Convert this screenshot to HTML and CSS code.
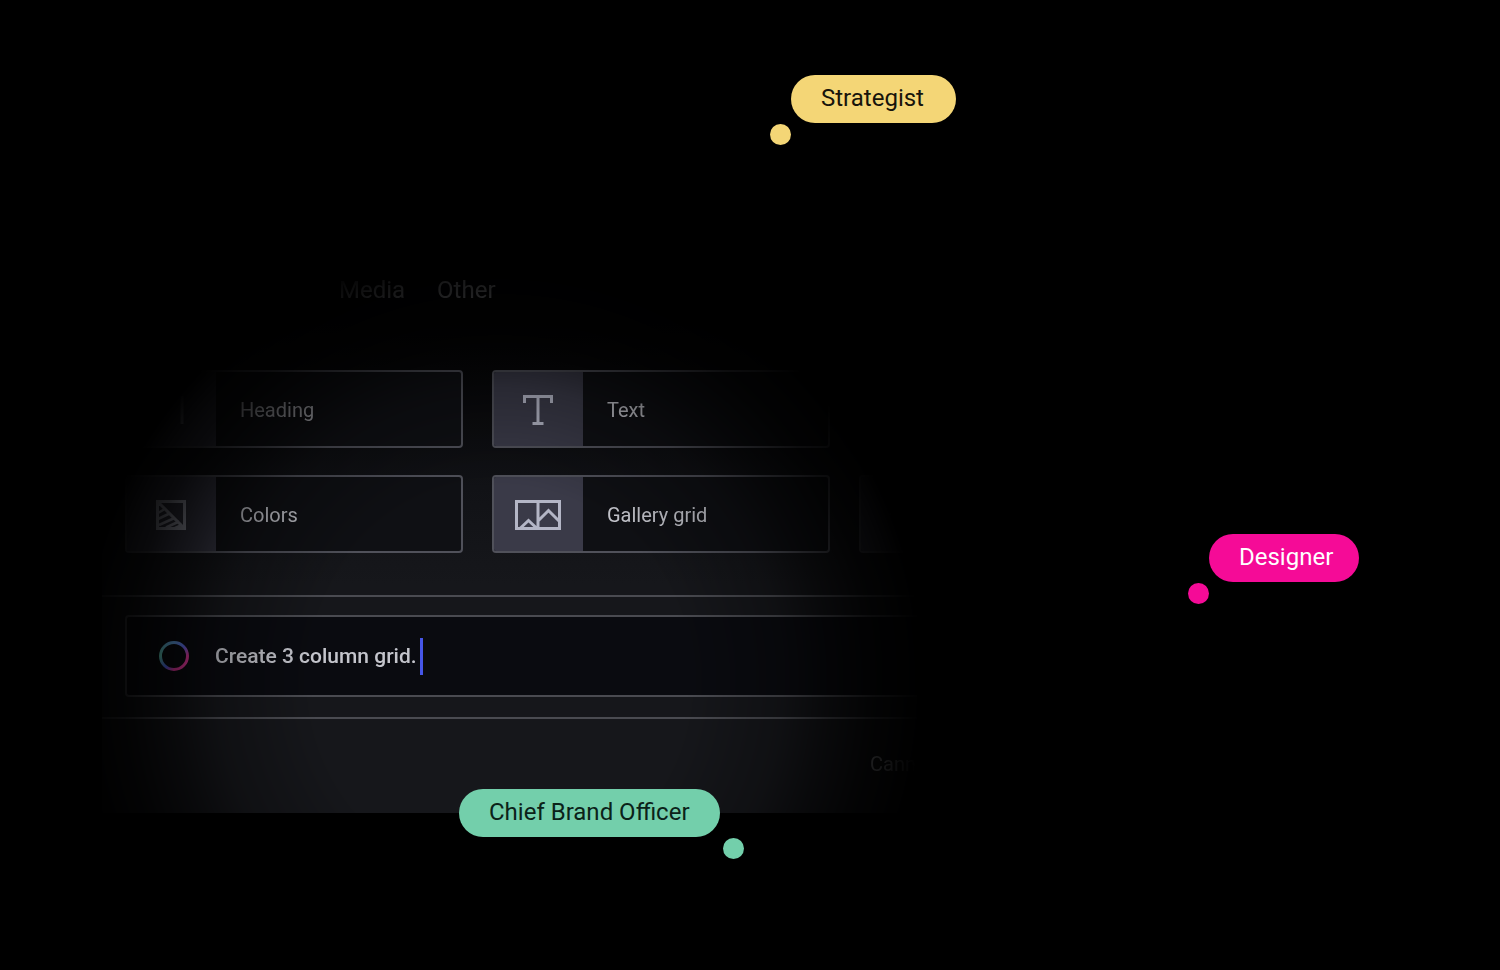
FILE: index.html
```
<!DOCTYPE html>
<html lang="en">
<head>
  <meta charset="UTF-8" />
  <title>Create</title>
  <link rel="stylesheet" href="styles.css">
</head>
<body>
  <main class="stage">
    <section class="window">
      <nav class="tabs">
        <a href="#media">Media</a>
        <a href="#other">Other</a>
      </nav>

      <div class="blocks">
        <button class="block" type="button">
          <span class="tile">
            <svg width="46" height="32" viewBox="0 0 46 32"><path d="M34 2v28" /></svg>
          </span>
          <span class="block-name">Heading</span>
        </button>
        <button class="block" type="button">
          <span class="tile">
            <svg width="46" height="32" viewBox="0 0 46 32"><path d="M9.500 9V2.500h27V9M23 2.500v27M17.500 29.500h11" /></svg>
          </span>
          <span class="block-name">Text</span>
        </button>
        <button class="block" type="button" aria-label="Page">
          <span class="tile"></span>
        </button>
        <button class="block" type="button">
          <span class="tile">
            <svg width="46" height="32" viewBox="0 0 46 32"><path d="M9.500 2.500h27v27h-27zM9.500 2.500l27 27" /><path class="hatch" d="M10 14l6-3.500M10 20l11.500-5.500M11 26l15.500-7M18 28.500l13-6M27 29l7-3" /></svg>
          </span>
          <span class="block-name">Colors</span>
        </button>
        <button class="block" type="button">
          <span class="tile">
            <svg width="46" height="32" viewBox="0 0 46 32"><path d="M1.500 2.500h43v27h-43zM23 2.500v27M5.500 29l8-7.500 8 7.500M23 22l10.500-10.500L44 22" /></svg>
          </span>
          <span class="block-name">Gallery grid</span>
        </button>
        <button class="block" type="button" aria-label="Image">
          <span class="tile">
            <svg width="46" height="32" viewBox="0 0 46 32"><path d="M9 16l6-10 18 17" /></svg>
          </span>
        </button>
      </div>

      <div class="prompt-row">
        <label class="prompt">
          <svg class="ring" width="32" height="32" viewBox="0 0 32 32">
            <path d="M2.500 16A13.500 13.500 0 0 1 16 2.500" stroke="url(#green)" />
            <path d="M16 2.500A13.500 13.500 0 0 1 29.500 16" stroke="url(#violet)" />
            <path d="M29.500 16A13.500 13.500 0 0 1 16 29.500" stroke="#f03ca6" />
            <path d="M16 29.500A13.500 13.500 0 0 1 2.500 16" stroke="url(#blue)" />
            <defs>
              <linearGradient id="green" x1="0" y1="1" x2="1" y2="0"><stop stop-color="#6ce0ca" /><stop offset="1" stop-color="#68aaf0" /></linearGradient>
              <linearGradient id="violet" x1="0" y1="0" x2="1" y2="1"><stop stop-color="#68aaf0" /><stop offset=".5" stop-color="#6674ff" /><stop offset="1" stop-color="#f03ca6" /></linearGradient>
              <linearGradient id="blue" x1="1" y1="1" x2="0" y2="0"><stop stop-color="#f03ca6" /><stop offset=".4" stop-color="#566cff" /><stop offset="1" stop-color="#6ce0ca" /></linearGradient>
            </defs>
          </svg>
          <input type="text" value="Create 3 column grid." aria-label="Prompt">
          <span class="caret"></span>
        </label>
      </div>

      <footer class="footer">
        <button class="cancel" type="button">Cann</button>
      </footer>
    </section>

    <div class="pin strategist">Strategist</div>
    <div class="pin designer">Designer</div>
    <div class="pin officer">Chief Brand Officer</div>
  </main>
</body>
</html>
```
FILE: styles.css
```
* {
  box-sizing: border-box;
}

body {
  margin: 0;
  background: #000;
  color: #c4c5cc;
  font-family: Roboto, Arial, sans-serif;
}

button, input {
  font: inherit;
  color: inherit;
}

.stage {
  position: relative;
  min-height: 100vh;
  padding: 160px 0 0 102px;
  overflow: hidden;
}

.window {
  width: 58.3%;
  padding-top: 114px;
  overflow: hidden;
  background: linear-gradient(#030304 25%, #111216 50%, #16171b 65%);
  /* spotlight over the lower middle of the window */
  mask-image: radial-gradient(415px 430px at 398px 520px, #000 45%, rgba(0, 0, 0, 0.7) 68%, rgba(0, 0, 0, 0.4) 79%, rgba(0, 0, 0, 0.16) 90%, rgba(0, 0, 0, 0.1) 95%, transparent 102%);
}

.tabs {
  display: flex;
  gap: 32px;
  padding-left: 237px;
  font-size: 24px;
  line-height: 32px;
}

.tabs a {
  color: inherit;
  text-decoration: none;
}

.blocks {
  display: grid;
  grid-template-columns: repeat(3, 338px);
  gap: 27px 29px;
  padding: 64px 23px 42px;
}

.block {
  display: flex;
  align-items: center;
  height: 78px;
  padding: 0;
  overflow: hidden;
  border: 2px solid #50515a;
  border-radius: 4px;
  background: #0f1014;
  font-size: 20px;
  text-align: left;
}

.tile {
  display: flex;
  align-items: center;
  justify-content: center;
  width: 89px;
  height: 100%;
  padding: 2px 2px 0 0;
  background: #3a3a48;
}

.tile svg {
  fill: none;
  stroke: #b4b6c6;
  stroke-width: 3;
}

.tile .hatch {
  stroke-width: 2.5;
}

.block-name {
  padding: 2px 0 0 24px;
}

.prompt-row {
  width: 1074px;
  padding: 18px 23px 20px;
  border-top: 2px solid #4a4b51;
  border-bottom: 2px solid #4a4b51;
}

.prompt {
  display: flex;
  align-items: center;
  height: 82px;
  padding-left: 31px;
  border: 2px solid #4a4b51;
  border-radius: 4px;
  background: #0a0b10;
}

.ring {
  fill: none;
  stroke-width: 3;
}

.prompt input {
  width: 205px;
  margin-left: 25px;
  padding: 0;
  border: 0;
  outline: 0;
  background: none;
  font-size: 21px;
  font-weight: 500;
}

.caret {
  width: 3px;
  height: 37px;
  background: #4656e8;
}

.footer {
  padding: 31px 0 35px 768px;
}

.cancel {
  padding: 0;
  border: 0;
  background: none;
  font-size: 20px;
  line-height: 28px;
}

.pin {
  position: absolute;
  padding: 0 30px 2px;
  border-radius: 24px;
  font-size: 24px;
  line-height: 46px;
  white-space: nowrap;
}

.pin::after {
  content: "";
  position: absolute;
  top: 49px;
  left: -21px;
  width: 21px;
  height: 21px;
  border-radius: 50%;
  background: inherit;
}

.strategist {
  top: 75px;
  left: 791px;
  padding-right: 32px;
  background: #f4d676;
  color: #17140b;
}

.designer {
  top: 534px;
  left: 1209px;
  padding-right: 26px;
  background: #f50b97;
  color: #fff;
}

.officer {
  top: 789px;
  left: 459px;
  background: #73cfab;
  color: #0b2219;
}

.officer::after {
  right: -24px;
  left: auto;
}
```
